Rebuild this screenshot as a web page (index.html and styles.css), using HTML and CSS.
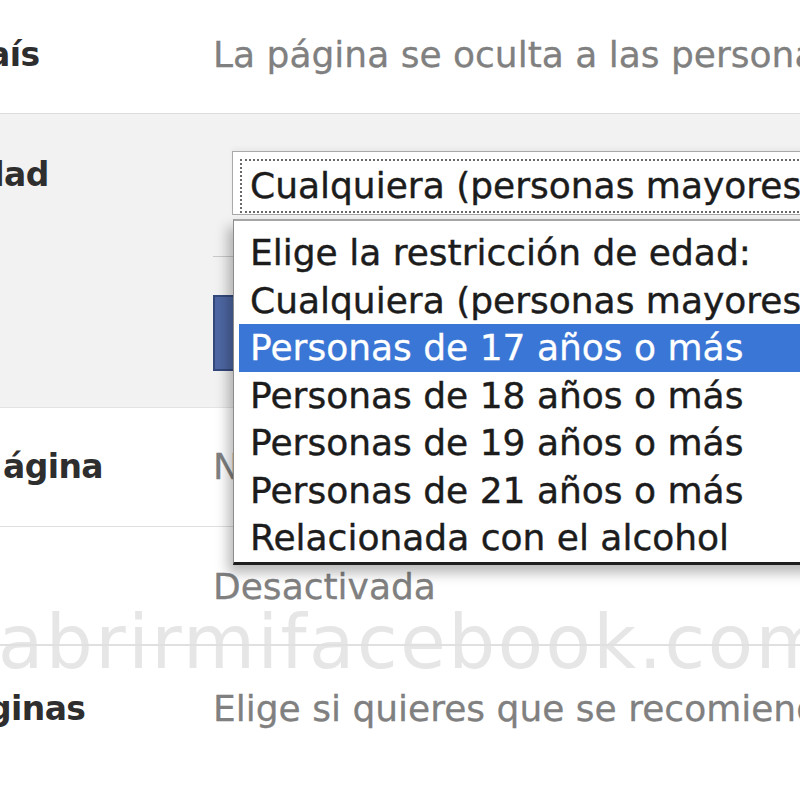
FILE: index.html
```html
<!DOCTYPE html>
<html lang="es">
<head>
<meta charset="utf-8">
<title>Restricciones de edad</title>
<link rel="stylesheet" href="styles.css">
</head>
<body>
<div class="page">
  <div class="row r1">
    <div class="label cut-a">aís</div>
    <div class="value">La página se oculta a las personas de determinados países</div>
  </div>
  <div class="row r2">
    <div class="label cut-d">dad</div>
    <div class="value">
      <div class="select">
        <div class="focus">Cualquiera (personas mayores de 13 años)</div>
      </div>
      <div class="divider"></div>
      <div class="button"></div>
    </div>
  </div>
  <div class="row r3">
    <div class="label cut-p">ágina</div>
    <div class="value">No hay palabras bloqueadas</div>
  </div>
  <div class="row r4">
    <div class="label"></div>
    <div class="value">Desactivada</div>
  </div>
  <div class="row r5">
    <div class="label cut-g">ginas</div>
    <div class="value">Elige si quieres que se recomiende tu página a otras personas</div>
  </div>

  <div class="watermark">abrirmifacebook.com</div>

  <ul class="menu">
    <li>Elige la restricción de edad:</li>
    <li>Cualquiera (personas mayores de 13 años)</li>
    <li class="selected">Personas de 17 años o más</li>
    <li>Personas de 18 años o más</li>
    <li>Personas de 19 años o más</li>
    <li>Personas de 21 años o más</li>
    <li>Relacionada con el alcohol</li>
  </ul>
</div>
</body>
</html>
```

FILE: styles.css
```css
* { box-sizing: border-box; }
html, body {
  margin: 0;
  padding: 0;
  width: 800px;
  height: 800px;
  overflow: hidden;
  background: #ffffff;
}
.page {
  position: relative;
  width: 800px;
  height: 800px;
  overflow: hidden;
  font-family: "DejaVu Sans", "Liberation Sans", sans-serif;
  font-size: 36px;
  line-height: 44px;
}
.row {
  display: flex;
  white-space: nowrap;
}
.label {
  width: 213px;
  flex: none;
  font-weight: bold;
  font-size: 33px;
  letter-spacing: -0.6px;
  color: #2e2e2e;
  overflow: visible;
}
.cut-a { margin-left: -12px; width: 225px; }
.cut-d { margin-left: -19px; width: 232px; }
.cut-p { margin-left: 3px; width: 210px; }
.cut-g { margin-left: -12px; width: 225px; }
.value {
  flex: 1;
  min-width: 0;
  color: #808080;
  -webkit-text-stroke: 0.3px #808080;
}
.r1 {
  height: 114px;
  padding-top: 33px;
  border-bottom: 1px solid #dcdcdc;
}
.r2 {
  background: #f2f2f2;
  height: 294px;
  padding-top: 39px;
  border-bottom: 1px solid #e4e4e4;
}
.r2 .value {
  display: flex;
  flex-direction: column;
}
.select {
  margin-left: 19px;
  margin-top: -2px;
  height: 64px;
  width: 620px;
  background: #ffffff;
  border: 1px solid #a9a9a9;
  padding: 7px 0 0 7px;
  box-shadow: 0 -3px 5px rgba(0,0,0,0.04);
}
.focus {
  height: 54px;
  border: 2px dotted #6a6a6a;
  border-right: none;
  padding-left: 8px;
  color: #1c1c1c;
  -webkit-text-stroke: 0.4px #1c1c1c;
  line-height: 50px;
}
.divider {
  margin-top: 41px;
  height: 1px;
  background: #c9c9c9;
}
.button {
  margin-top: 38px;
  width: 120px;
  height: 76px;
  background: #4e67a3;
  border: 2px solid #34487c;
}
.r3 {
  height: 119px;
  padding-top: 37px;
  border-bottom: 1px solid #e0e0e0;
}
.r4 {
  padding-top: 38px;
  height: 160px;
}
.r5 {
  height: 120px;
}
.watermark {
  position: absolute;
  left: -2px;
  top: 602px;
  font-size: 74px;
  line-height: 80px;
  color: #e6e6e6;
  letter-spacing: 2.5px;
  text-decoration: line-through;
  text-decoration-color: #e0e0e0;
  text-decoration-thickness: 2px;
  white-space: nowrap;
}
.menu {
  position: absolute;
  left: 233px;
  top: 219px;
  width: 620px;
  margin: 0;
  padding: 8px 0 0 5px;
  list-style: none;
  background: #ffffff;
  border-top: 2px solid #a5a5a5;
  border-left: 1px solid #8c8c8c;
  border-bottom: 3px solid #1e1e1e;
  box-shadow: -5px 8px 12px rgba(0,0,0,0.28);
  color: #1c1c1c;
  -webkit-text-stroke: 0.4px #1c1c1c;
  white-space: nowrap;
}
.menu li {
  height: 47.5px;
  line-height: 47.5px;
  padding-left: 11px;
}
.menu li.selected {
  background: #3a76d5;
  color: #ffffff;
  -webkit-text-stroke: 0.3px #ffffff;
}
```
